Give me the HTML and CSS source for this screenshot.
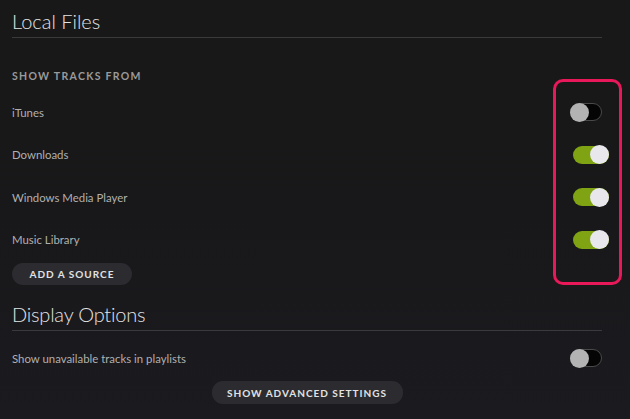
FILE: index.html
```html
<!DOCTYPE html>
<html>
<head>
<meta charset="utf-8">
<link rel="stylesheet" href="styles.css">
</head>
<body>
<div class="page">
  <h2 class="heading">Local Files</h2>
  <div class="section-label">SHOW TRACKS FROM</div>
  <div class="sources">
    <div class="row"><span class="label">iTunes</span><span class="toggle off"><span class="knob"></span></span></div>
    <div class="row"><span class="label">Downloads</span><span class="toggle on"><span class="knob"></span></span></div>
    <div class="row"><span class="label">Windows Media Player</span><span class="toggle on"><span class="knob"></span></span></div>
    <div class="row"><span class="label">Music Library</span><span class="toggle on"><span class="knob"></span></span></div>
    <div class="highlight"></div>
  </div>
  <div class="btn-row"><button class="pill">ADD A SOURCE</button></div>
  <h2 class="heading second">Display Options</h2>
  <div class="row single"><span class="label">Show unavailable tracks in playlists</span><span class="toggle off"><span class="knob"></span></span></div>
  <div class="btn-row center"><button class="pill wide">SHOW ADVANCED SETTINGS</button></div>
</div>
</body>
</html>
```
FILE: styles.css
```css
html, body {
  margin: 0;
  padding: 0;
  height: 100%;
}
body {
  background: linear-gradient(#181818 0%, #18181a 50%, #1b1a1f 100%);
  font-family: Lato, "Open Sans", sans-serif;
  color: #b3b3b3;
  overflow: hidden;
}
.page {
  margin: 0 28px 0 12px;
  position: relative;
}
.heading {
  margin: 0;
  padding: 9px 0 4px;
  font-size: 20px;
  line-height: 24px;
  font-weight: 300;
  color: #e4e4e4;
  border-bottom: 1px solid #3a3a3c;
}
.heading.second {
  margin-top: 8px;
  letter-spacing: -0.2px;
}
.section-label {
  margin-top: 31px;
  margin-bottom: 8px;
  font-size: 10.5px;
  line-height: 14px;
  font-weight: 700;
  letter-spacing: 1.3px;
  color: #9a9a9a;
}
.sources {
  position: relative;
}
.row {
  height: 42.5px;
  display: flex;
  align-items: center;
  justify-content: space-between;
}
.row.single {
  height: 42px;
  margin-top: 6px;
}
.label {
  font-size: 11.4px;
  color: #b0b0b0;
}
.toggle {
  display: flex;
  align-items: center;
  height: 18px;
  border-radius: 9px;
  box-sizing: border-box;
}
.toggle.off {
  width: 32px;
  background: #050505;
  border: 1px solid #4a4a4a;
  justify-content: flex-start;
}
.toggle.off .knob {
  width: 19px;
  height: 19px;
  margin-left: -1px;
  border-radius: 50%;
  background: #b3b3b3;
  flex: none;
}
.toggle.on {
  width: 36px;
  margin-right: -7px;
  background: #7fa313;
  justify-content: flex-end;
}
.toggle.on .knob {
  width: 19px;
  height: 19px;
  border-radius: 50%;
  background: #e8e8ec;
  flex: none;
}
.highlight {
  position: absolute;
  left: 541px;
  top: -12px;
  width: 69px;
  height: 206px;
  box-sizing: border-box;
  border: 3px solid #e8185a;
  border-radius: 10px;
  pointer-events: none;
}
.btn-row {
  display: flex;
  margin-top: 2px;
}
.btn-row.center {
  justify-content: center;
}
.pill {
  font-family: Lato, "Open Sans", sans-serif;
  border: none;
  background: #2c2c30;
  color: #e2e2e2;
  font-size: 10px;
  font-weight: 700;
  letter-spacing: 1px;
  height: 22px;
  border-radius: 11px;
  padding: 0;
  white-space: nowrap;
  width: 120px;
}
.pill.wide {
  width: 191px;
  height: 23px;
}
```
